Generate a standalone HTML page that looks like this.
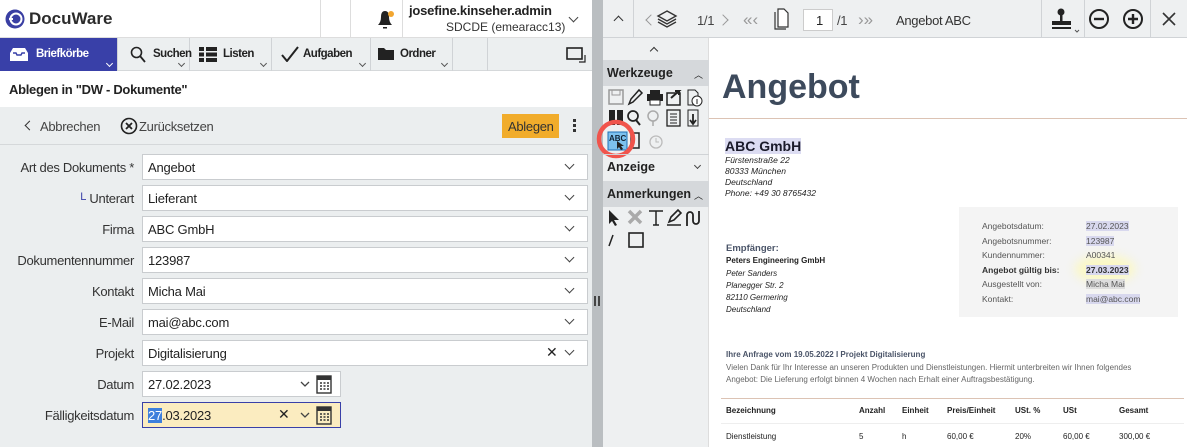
<!DOCTYPE html>
<html><head><meta charset="utf-8"><style>
*{box-sizing:border-box;margin:0;padding:0}
body{width:1187px;height:447px;overflow:hidden;position:relative;background:#fff;font-family:"Liberation Sans","DejaVu Sans",sans-serif;font-size:12px;color:#222}
.a{position:absolute}
.lbl{position:absolute;right:1053px;font-size:13px;color:#333;text-align:right;white-space:nowrap;letter-spacing:-0.3px}
.fld{position:absolute;left:142px;width:446px;height:26px;background:#fff;border:1px solid #c9cccf;font-size:13px;padding:5px 0 0 5px;letter-spacing:-0.2px}
.chev{position:absolute;top:6px;width:7px;height:7px;border-right:1.3px solid #444;border-bottom:1.3px solid #444;transform:rotate(45deg)}
.nav{position:absolute;top:38px;height:33px;border-right:1px solid #d0d3d6;font-weight:bold;font-size:11.5px;color:#222;letter-spacing:-0.5px}
.nsub{position:absolute;right:5px;bottom:5px;width:5px;height:5px;border-right:1px solid #555;border-bottom:1px solid #555;transform:rotate(45deg)}
.tb{color:#444;font-size:13px;letter-spacing:-0.3px}
.sec{position:absolute;left:603px;width:106px;background:#d5d8db;font-weight:bold;font-size:12.5px;padding:6px 4px;color:#222}
.doc{position:absolute;font-family:"Liberation Sans",sans-serif}
</style></head><body>
<div class="a" style="left:0;top:0;width:592px;height:38px;background:#fff;border-bottom:1px solid #ddd"></div>
<svg class="a" style="left:5px;top:9px" width="20" height="20"><circle cx="10" cy="10" r="9.5" fill="#3a3fa3"/><circle cx="11" cy="10" r="5.5" fill="none" stroke="#fff" stroke-width="2"/><path d="M4 10h4" stroke="#fff" stroke-width="2"/></svg>
<div class="a" style="left:29px;top:9px;font-size:17px;font-weight:bold;color:#2b2b2b">DocuWare</div>
<div class="a" style="left:320px;top:0;width:1px;height:38px;background:#ddd"></div>
<div class="a" style="left:350px;top:0;width:1px;height:38px;background:#ddd"></div>
<svg class="a" style="left:375px;top:8px" width="20" height="22"><path d="M3 17 Q6 14 6 9 Q6 3 10 3 Q14 3 14 9 Q14 14 17 17Z" fill="#222"/><circle cx="16" cy="6" r="3" fill="#f2a630"/><rect x="8" y="19" width="4" height="1.5" fill="#222"/></svg>
<div class="a" style="left:402px;top:0;width:1px;height:38px;background:#ddd"></div>
<div class="a" style="left:409px;top:3px;font-size:13px;font-weight:bold;color:#222;letter-spacing:-0.2px">josefine.kinseher.admin</div>
<div class="a" style="left:446px;top:20px;font-size:12px;color:#333">SDCDE (emearacc13)</div>
<div class="chev" style="left:570px;top:14px"></div>
<div class="a" style="left:0;top:38px;width:592px;height:33px;background:#eceff0;border-bottom:1px solid #d5d8da"></div>
<div class="nav" style="left:0;width:118px;background:#3940a8;color:#fff"><svg class="a" style="left:9px;top:9px" width="20" height="15"><path d="M1 6 L4 1 H16 L19 6 V14 H1Z" fill="#fff"/><path d="M4 6 H7 L8 8 H12 L13 6 H16" fill="none" stroke="#3940a8" stroke-width="1.4"/></svg><span class="a" style="left:36px;top:10px">Briefkörbe</span><div class="nsub" style="border-color:#fff"></div></div>
<div class="nav" style="left:118px;width:72px"><svg class="a" style="left:12px;top:8px" width="16" height="17"><circle cx="6.5" cy="6.5" r="5" fill="none" stroke="#222" stroke-width="1.6"/><path d="M10 10l5 6" stroke="#222" stroke-width="1.8"/></svg><span class="a" style="left:35px;top:10px">Suchen</span><div class="nsub"></div></div>
<div class="nav" style="left:190px;width:82px"><svg class="a" style="left:9px;top:9px" width="18" height="15"><path d="M0 0h5v4H0zM7 0h11v4H7zM0 5.5h5v4H0zM7 5.5h11v4H7zM0 11h5v4H0zM7 11h11v4H7z" fill="#222"/></svg><span class="a" style="left:33px;top:10px">Listen</span><div class="nsub"></div></div>
<div class="nav" style="left:272px;width:99px"><svg class="a" style="left:9px;top:8px" width="18" height="16"><path d="M1 9l5 6L17 1" fill="none" stroke="#222" stroke-width="2"/></svg><span class="a" style="left:31px;top:10px">Aufgaben</span><div class="nsub"></div></div>
<div class="nav" style="left:371px;width:82px"><svg class="a" style="left:7px;top:10px" width="16" height="12"><path d="M0 0h6l2 2h8v10H0z" fill="#222"/></svg><span class="a" style="left:29px;top:10px">Ordner</span><div class="nsub"></div></div>
<div class="a" style="left:453px;top:38px;width:35px;height:33px;border-right:1px solid #d0d3d6"></div>
<svg class="a" style="left:566px;top:47px" width="20" height="16"><rect x="1" y="1" width="15" height="11" fill="none" stroke="#222" stroke-width="1.6"/><path d="M19 8v7h-6" fill="none" stroke="#222" stroke-width="1.2"/></svg>
<div class="a" style="left:0;top:71px;width:592px;height:36px;background:#fff"></div>
<div class="a" style="left:9px;top:82px;font-size:13px;font-weight:bold;color:#222;letter-spacing:-0.3px">Ablegen in "DW - Dokumente"</div>
<div class="a" style="left:0;top:107px;width:592px;height:340px;background:#ebeeef"></div>
<div class="a" style="left:0;top:144px;width:592px;height:1px;background:#d5d8da"></div>
<div class="a" style="left:26px;top:122px;width:7px;height:7px;border-left:1.5px solid #333;border-bottom:1.5px solid #333;transform:rotate(45deg)"></div>
<div class="a tb" style="left:40px;top:119px">Abbrechen</div>
<svg class="a" style="left:120px;top:117px" width="18" height="18"><circle cx="9" cy="9" r="7.5" fill="none" stroke="#222" stroke-width="1.6"/><path d="M6 6l6 6M12 6l-6 6" stroke="#222" stroke-width="1.8"/></svg>
<div class="a tb" style="left:139px;top:119px">Zurücksetzen</div>
<div class="a" style="left:502px;top:114px;width:57px;height:24px;background:#f1ac2b;font-size:13px;color:#333;padding:5px 0 0 6px;letter-spacing:-0.3px">Ablegen</div>
<div class="a" style="left:573px;top:119px;width:3px;height:3px;background:#333;box-shadow:0 5px #333,0 10px #333"></div>
<div class="lbl" style="top:160px">Art des Dokuments *</div><div class="fld" style="top:154px">Angebot<div class="chev" style="left:423px"></div></div>
<div class="lbl" style="top:191px"><span style="font-size:11px;vertical-align:top;color:#3940a8">L</span> Unterart</div><div class="fld" style="top:185px">Lieferant<div class="chev" style="left:423px"></div></div>
<div class="lbl" style="top:222px">Firma</div><div class="fld" style="top:216px">ABC GmbH<div class="chev" style="left:423px"></div></div>
<div class="lbl" style="top:253px">Dokumentennummer</div><div class="fld" style="top:247px">123987<div class="chev" style="left:423px"></div></div>
<div class="lbl" style="top:284px">Kontakt</div><div class="fld" style="top:278px">Micha Mai<div class="chev" style="left:423px"></div></div>
<div class="lbl" style="top:315px">E-Mail</div><div class="fld" style="top:309px">mai@abc.com<div class="chev" style="left:423px"></div></div>
<div class="lbl" style="top:346px">Projekt</div><div class="fld" style="top:340px">Digitalisierung<span class="a" style="left:403px;top:3px;font-weight:bold;font-size:14px">✕</span><div class="chev" style="left:423px"></div></div>
<div class="lbl" style="top:377px">Datum</div><div class="fld" style="top:371px;width:199px">27.02.2023</div>
<div class="lbl" style="top:408px">Fälligkeitsdatum</div><div class="fld" style="top:402px;width:199px;background:#fbecc0;border-color:#3940a8"><span style="background:#3e7fdc;color:#fff">27</span>.03.2023<span class="a" style="left:135px;top:3px;font-weight:bold;font-size:14px">✕</span></div>
<svg class="a" style="left:299px;top:374px" width="36" height="22"><path d="M2 8l4 4 4-4" fill="none" stroke="#444" stroke-width="1.3"/><rect x="18" y="2" width="14" height="17" fill="#fff" stroke="#333" stroke-width="1.4"/><rect x="18" y="2" width="14" height="4" fill="#333"/><path d="M21 9h2M24.5 9h2M28 9h2M21 12h2M24.5 12h2M28 12h2M21 15h2M24.5 15h2M28 15h2" stroke="#333" stroke-width="1.5"/></svg>
<svg class="a" style="left:299px;top:405px" width="36" height="22"><path d="M2 8l4 4 4-4" fill="none" stroke="#444" stroke-width="1.3"/><rect x="18" y="2" width="14" height="17" fill="#fbecc0" stroke="#333" stroke-width="1.4"/><rect x="18" y="2" width="14" height="4" fill="#333"/><path d="M21 9h2M24.5 9h2M28 9h2M21 12h2M24.5 12h2M28 12h2M21 15h2M24.5 15h2M28 15h2" stroke="#333" stroke-width="1.5"/></svg>
<div class="a" style="left:592px;top:0;width:11px;height:447px;background:#babec1"></div>
<div class="a" style="left:594px;top:296px;width:6px;height:10px;border-left:2px solid #444;border-right:2px solid #444"></div>
<div class="a" style="left:603px;top:0;width:584px;height:38px;background:#eef0f1;border-bottom:1px solid #d0d3d6"></div>
<div class="a" style="left:633px;top:0;width:1px;height:38px;background:#d0d3d6"></div>
<div class="a" style="left:615px;top:17px;width:7px;height:7px;border-left:1.4px solid #333;border-top:1.4px solid #333;transform:rotate(45deg)"></div>
<div class="a" style="left:647px;top:16px;width:8px;height:8px;border-left:1.3px solid #999;border-bottom:1.3px solid #999;transform:rotate(45deg)"></div>
<svg class="a" style="left:656px;top:9px" width="22" height="20"><path d="M11 2l9 5-9 5-9-5z" fill="none" stroke="#333" stroke-width="1.4"/><path d="M2 10l9 5 9-5M2 13l9 5 9-5" fill="none" stroke="#333" stroke-width="1.4"/></svg>
<div class="a tb" style="left:697px;top:13px">1/1</div>
<div class="a" style="left:719px;top:16px;width:8px;height:8px;border-right:1.3px solid #999;border-top:1.3px solid #999;transform:rotate(45deg)"></div>
<div class="a" style="left:743px;top:10px;color:#999;font-size:17px">«‹</div>
<svg class="a" style="left:772px;top:8px" width="18" height="22"><path d="M6 1h6l4 4v14H6z" fill="#fff" stroke="#333" stroke-width="1.2"/><path d="M3 4v17h11" fill="none" stroke="#333" stroke-width="1.2"/></svg>
<div class="a" style="left:803px;top:9px;width:30px;height:22px;background:#fff;border:1px solid #ccc;font-size:13px;padding:3px 0 0 12px">1</div>
<div class="a tb" style="left:837px;top:13px">/1</div>
<div class="a" style="left:858px;top:10px;color:#999;font-size:17px">›»</div>
<div class="a tb" style="left:896px;top:13px;color:#333">Angebot ABC</div>
<div class="a" style="left:1041px;top:0;width:1px;height:38px;background:#d0d3d6"></div>
<div class="a" style="left:1084px;top:0;width:1px;height:38px;background:#d0d3d6"></div>
<div class="a" style="left:1150px;top:0;width:1px;height:38px;background:#d0d3d6"></div>
<svg class="a" style="left:1050px;top:8px" width="32" height="26"><circle cx="11" cy="4" r="3.5" fill="#222"/><rect x="10" y="6" width="2.5" height="7" fill="#222"/><path d="M2 13h19v4H2z" fill="#222"/><rect x="2" y="19" width="19" height="2" fill="#222"/><path d="M25 22l2 2 2-2" fill="none" stroke="#555"/></svg>
<svg class="a" style="left:1088px;top:8px" width="22" height="22"><circle cx="11" cy="11" r="9" fill="none" stroke="#222" stroke-width="2"/><path d="M6 11h10" stroke="#222" stroke-width="2.4"/></svg>
<svg class="a" style="left:1122px;top:8px" width="22" height="22"><circle cx="11" cy="11" r="9" fill="none" stroke="#222" stroke-width="2"/><path d="M6 11h10M11 6v10" stroke="#222" stroke-width="2.4"/></svg>
<svg class="a" style="left:1162px;top:12px" width="14" height="14"><path d="M1 1l12 12M13 1L1 13" stroke="#333" stroke-width="1.6"/></svg>
<div class="a" style="left:603px;top:38px;width:106px;height:409px;background:#eef0f1;border-right:1px solid #ddd"></div>
<div class="a" style="left:651px;top:48px;width:6px;height:6px;border-left:1.3px solid #333;border-top:1.3px solid #333;transform:rotate(45deg)"></div>
<div class="sec" style="top:60px;height:26px">Werkzeuge<span class="a" style="right:6px;top:8px;font-weight:normal;font-size:9px">︿</span></div>
<svg class="a" style="left:607px;top:88px" width="100" height="64">
<rect x="2" y="2" width="14" height="14" fill="none" stroke="#999" stroke-width="1.5"/><rect x="5" y="2" width="8" height="5" fill="none" stroke="#999"/>
<path d="M22 16l2-5 8-9 3 3-9 9z" fill="none" stroke="#222" stroke-width="1.5"/>
<rect x="40" y="6" width="16" height="7" fill="#222"/><rect x="43" y="2" width="10" height="4" fill="#222"/><rect x="43" y="12" width="10" height="5" fill="#fff" stroke="#222"/>
<rect x="60" y="5" width="13" height="12" fill="none" stroke="#222" stroke-width="1.5"/><path d="M64 10l8-7h-4M72 3v4" fill="none" stroke="#222" stroke-width="2"/>
<path d="M81 2h7l3 3v12H81z" fill="none" stroke="#222"/><circle cx="90" cy="13" r="5" fill="#fff" stroke="#222"/><path d="M90 11v5" stroke="#222"/>
<rect x="2" y="22" width="6" height="15" fill="#222"/><rect x="10" y="22" width="6" height="15" fill="#222"/>
<circle cx="26" cy="28" r="5" fill="none" stroke="#222" stroke-width="1.7"/><path d="M29 32l4 5" stroke="#222" stroke-width="2"/>
<circle cx="46" cy="28" r="5" fill="none" stroke="#aaa" stroke-width="1.5"/><path d="M46 33v5" stroke="#aaa" stroke-width="1.5"/>
<rect x="60" y="22" width="13" height="16" fill="none" stroke="#222" stroke-width="1.3"/><path d="M63 26h7M63 29h7M63 32h7M63 35h7" stroke="#222"/>
<path d="M81 22h10v16H81z" fill="none" stroke="#222"/><path d="M86 26v9M83 32l3 4 3-4" fill="none" stroke="#222" stroke-width="1.8"/>
<rect x="1" y="44" width="19" height="18" fill="#7dc1ee" stroke="#1e6fb5"/><text x="2" y="53" font-size="8" font-weight="bold" font-family="Liberation Sans" fill="#123">ABC</text><path d="M10 53l0 8 2-2 2 3 2-1-2-3 3 0z" fill="#222"/>
<rect x="24" y="45" width="8" height="15" fill="none" stroke="#222" stroke-width="1.5"/>
<circle cx="49" cy="54" r="6" fill="none" stroke="#bbb" stroke-width="1.3"/><path d="M49 50v4h3" fill="none" stroke="#bbb"/>
</svg>
<svg class="a" style="left:590px;top:118px" width="50" height="44"><circle cx="26" cy="21" r="17" fill="none" stroke="#f0544c" stroke-width="4.5"/></svg>
<div class="a" style="left:603px;top:154px;width:106px;height:1px;background:#d0d3d6"></div>
<div class="a" style="left:607px;top:160px;font-weight:bold;font-size:12.5px">Anzeige</div>
<div class="a" style="left:695px;top:163px;width:5px;height:5px;border-right:1px solid #444;border-bottom:1px solid #444;transform:rotate(45deg)"></div>
<div class="sec" style="top:181px;height:26px">Anmerkungen<span class="a" style="right:6px;top:8px;font-weight:normal;font-size:9px">︿</span></div>
<svg class="a" style="left:607px;top:208px" width="100" height="44">
<path d="M2 2v14l3-3 3 5 2-1-3-5h5z" fill="#222"/>
<path d="M22 3l12 12M34 3L22 15" stroke="#aaa" stroke-width="3.5"/>
<path d="M42 3h14M49 3v14M46 17h6" stroke="#222" stroke-width="1.5"/>
<path d="M62 14l2-5 7-7 3 3-7 7zM60 17h14" fill="none" stroke="#222" stroke-width="1.6"/>
<path d="M80 18V7a3 3 0 016 0v6a3 3 0 006 0V3" fill="none" stroke="#222" stroke-width="1.8"/>
<path d="M6 27l-4 11" stroke="#222" stroke-width="1.5"/>
<rect x="22" y="25" width="14" height="14" fill="none" stroke="#222" stroke-width="1.6"/>
</svg>
<div class="doc" style="left:722px;top:68px;font-size:34px;font-weight:bold;color:#3d4a5c">Angebot</div>
<div class="a" style="left:709px;top:118px;width:478px;height:1px;background:#dcc3b4"></div>
<div class="doc" style="left:725px;top:138px;font-size:14px;font-weight:bold;color:#1a1a2a;background:#dcdcf2">ABC GmbH</div>
<div class="doc" style="left:725px;top:155px;font-size:8.5px;font-style:italic;line-height:11px;color:#222">Fürstenstraße 22<br>80333 München<br>Deutschland<br>Phone: +49 30 8765432</div>
<div class="a" style="left:959px;top:207px;width:219px;height:110px;background:#f4f4f4"></div>
<div class="doc" style="left:982px;top:219px;font-size:8.5px;line-height:14.5px;color:#555">Angebotsdatum:<br>Angebotsnummer:<br>Kundennummer:<br><b style="color:#333">Angebot gültig bis:</b><br>Ausgestellt von:<br>Kontakt:</div>
<div class="a" style="left:1075px;top:255px;width:60px;height:28px;border-radius:50%;background:#fbf8c4;filter:blur(5px)"></div>
<div class="doc" style="left:1086px;top:219px;font-size:8.5px;line-height:14.5px;color:#555"><span style="background:#d8d8ee">27.02.2023</span><br><span style="background:#d8d8ee">123987</span><br>A00341<br><b style="background:#d8d8ee;color:#333">27.03.2023</b><br><span style="background:#ddd">Micha Mai</span><br><span style="background:#d8d8ee">mai@abc.com</span></div>
<div class="doc" style="left:726px;top:243px;font-size:9.5px;font-weight:bold;color:#4a5468">Empfänger:</div>
<div class="doc" style="left:726px;top:256px;font-size:8px;font-weight:bold;color:#222">Peters Engineering GmbH</div>
<div class="doc" style="left:726px;top:268px;font-size:8px;font-style:italic;line-height:12px;color:#222">Peter Sanders<br>Planegger Str. 2<br>82110 Germering<br>Deutschland</div>
<div class="doc" style="left:726px;top:350px;font-size:8px;font-weight:bold;color:#4a5468">Ihre Anfrage vom 19.05.2022 I Projekt Digitalisierung</div>
<div class="doc" style="left:726px;top:362px;font-size:8px;line-height:11.5px;color:#666">Vielen Dank für Ihr Interesse an unseren Produkten und Dienstleistungen. Hiermit unterbreiten wir Ihnen folgendes<br>Angebot: Die Lieferung erfolgt binnen 4 Wochen nach Erhalt einer Auftragsbestätigung.</div>
<div class="a" style="left:721px;top:398px;width:463px;height:1px;background:#dcc3b4"></div>
<div class="a" style="left:721px;top:423px;width:463px;height:1px;background:#eee"></div>
<div class="doc" style="left:726px;top:406px;font-size:8px;font-weight:bold;color:#222">Bezeichnung</div>
<div class="doc" style="left:859px;top:406px;font-size:8px;font-weight:bold;color:#222">Anzahl</div>
<div class="doc" style="left:902px;top:406px;font-size:8px;font-weight:bold;color:#222">Einheit</div>
<div class="doc" style="left:947px;top:406px;font-size:8px;font-weight:bold;color:#222">Preis/Einheit</div>
<div class="doc" style="left:1015px;top:406px;font-size:8px;font-weight:bold;color:#222">USt. %</div>
<div class="doc" style="left:1063px;top:406px;font-size:8px;font-weight:bold;color:#222">USt</div>
<div class="doc" style="left:1119px;top:406px;font-size:8px;font-weight:bold;color:#222">Gesamt</div>
<div class="doc" style="left:726px;top:432px;font-size:8px;color:#222">Dienstleistung</div>
<div class="doc" style="left:859px;top:432px;font-size:8px;color:#222">5</div>
<div class="doc" style="left:902px;top:432px;font-size:8px;color:#222">h</div>
<div class="doc" style="left:947px;top:432px;font-size:8px;color:#222">60,00 €</div>
<div class="doc" style="left:1015px;top:432px;font-size:8px;color:#222">20%</div>
<div class="doc" style="left:1063px;top:432px;font-size:8px;color:#222">60,00 €</div>
<div class="doc" style="left:1119px;top:432px;font-size:8px;color:#222">300,00 €</div>
</body></html>
